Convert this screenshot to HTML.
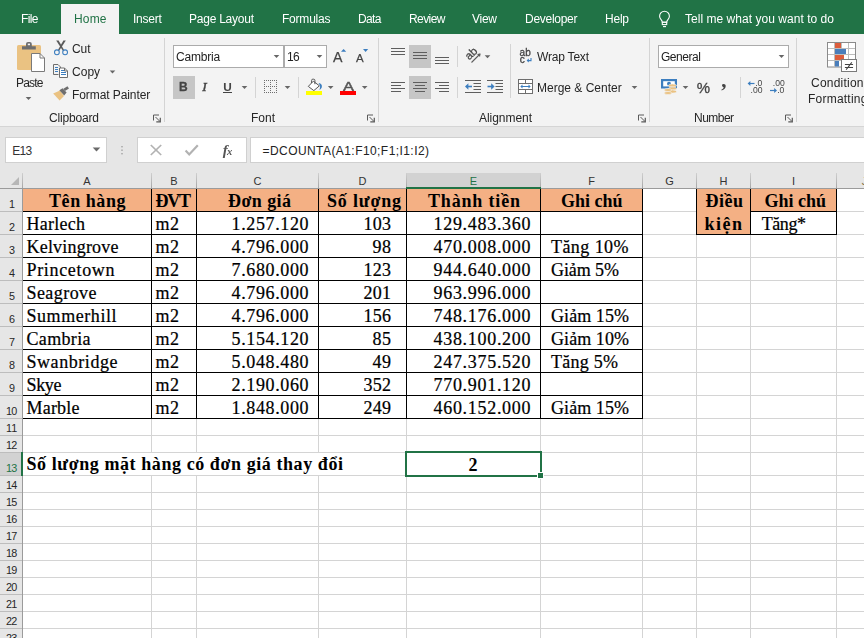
<!DOCTYPE html>
<html><head><meta charset="utf-8"><title>Excel</title>
<style>
html,body{margin:0;padding:0}
body{width:864px;height:638px;overflow:hidden;position:relative;background:#fff}
.b{position:absolute}
.t{position:absolute;white-space:pre}
.g{will-change:transform}
svg{position:absolute;overflow:visible}
</style></head><body>
<div class="b" style="left:0px;top:0px;width:864px;height:34px;background:#217346;"></div>
<div class="b" style="left:61px;top:4px;width:58px;height:30px;background:#f3f3f3;"></div>
<span class="t g" style="left:20.50px;top:9.34px;font-family:'Liberation Sans',sans-serif;font-size:12px;line-height:20px;color:#fff;letter-spacing:-0.615px;">File</span>
<span class="t g" style="left:73.50px;top:9.34px;font-family:'Liberation Sans',sans-serif;font-size:12px;line-height:20px;color:#217346;letter-spacing:0.161px;">Home</span>
<span class="t g" style="left:133.25px;top:9.34px;font-family:'Liberation Sans',sans-serif;font-size:12px;line-height:20px;color:#fff;letter-spacing:-0.253px;">Insert</span>
<span class="t g" style="left:189.00px;top:9.34px;font-family:'Liberation Sans',sans-serif;font-size:12px;line-height:20px;color:#fff;letter-spacing:-0.239px;">Page Layout</span>
<span class="t g" style="left:281.50px;top:9.34px;font-family:'Liberation Sans',sans-serif;font-size:12px;line-height:20px;color:#fff;letter-spacing:-0.217px;">Formulas</span>
<span class="t g" style="left:357.50px;top:9.34px;font-family:'Liberation Sans',sans-serif;font-size:12px;line-height:20px;color:#fff;letter-spacing:-0.620px;">Data</span>
<span class="t g" style="left:408.50px;top:9.34px;font-family:'Liberation Sans',sans-serif;font-size:12px;line-height:20px;color:#fff;letter-spacing:-0.572px;">Review</span>
<span class="t g" style="left:472.00px;top:9.34px;font-family:'Liberation Sans',sans-serif;font-size:12px;line-height:20px;color:#fff;letter-spacing:-0.266px;">View</span>
<span class="t g" style="left:524.50px;top:9.34px;font-family:'Liberation Sans',sans-serif;font-size:12px;line-height:20px;color:#fff;letter-spacing:-0.275px;">Developer</span>
<span class="t g" style="left:604.50px;top:9.34px;font-family:'Liberation Sans',sans-serif;font-size:12px;line-height:20px;color:#fff;letter-spacing:-0.229px;">Help</span>
<span class="t g" style="left:684.50px;top:9.34px;font-family:'Liberation Sans',sans-serif;font-size:12px;line-height:20px;color:#fff;letter-spacing:0.035px;">Tell me what you want to do</span>
<div class="b" style="left:0px;top:34px;width:864px;height:92px;background:#f3f3f3;"></div>
<div class="b" style="left:0px;top:126px;width:864px;height:47px;background:#e6e6e6;"></div>
<div class="b" style="left:0px;top:126px;width:864px;height:1px;background:#d5d5d5;"></div>
<div class="b" style="left:164px;top:38px;width:1px;height:84px;background:#d4d4d4;"></div>
<div class="b" style="left:378px;top:38px;width:1px;height:84px;background:#d4d4d4;"></div>
<div class="b" style="left:649px;top:38px;width:1px;height:84px;background:#d4d4d4;"></div>
<div class="b" style="left:796px;top:38px;width:1px;height:84px;background:#d4d4d4;"></div>
<span class="t g" style="left:15.50px;top:73.34px;font-family:'Liberation Sans',sans-serif;font-size:12px;line-height:20px;color:#262626;letter-spacing:-0.797px;">Paste</span>
<span class="t g" style="left:71.90px;top:39.34px;font-family:'Liberation Sans',sans-serif;font-size:12px;line-height:20px;color:#262626;letter-spacing:-0.044px;">Cut</span>
<span class="t g" style="left:71.90px;top:62.34px;font-family:'Liberation Sans',sans-serif;font-size:12px;line-height:20px;color:#262626;letter-spacing:0.028px;">Copy</span>
<span class="t g" style="left:71.70px;top:85.34px;font-family:'Liberation Sans',sans-serif;font-size:12px;line-height:20px;color:#262626;letter-spacing:-0.081px;">Format Painter</span>
<span class="t g" style="left:48.75px;top:108.34px;font-family:'Liberation Sans',sans-serif;font-size:12px;line-height:20px;color:#262626;letter-spacing:-0.172px;">Clipboard</span>
<span class="t g" style="left:251.00px;top:108.34px;font-family:'Liberation Sans',sans-serif;font-size:12px;line-height:20px;color:#262626;letter-spacing:-0.005px;">Font</span>
<span class="t g" style="left:479.00px;top:108.34px;font-family:'Liberation Sans',sans-serif;font-size:12px;line-height:20px;color:#262626;letter-spacing:-0.047px;">Alignment</span>
<span class="t g" style="left:694.40px;top:108.34px;font-family:'Liberation Sans',sans-serif;font-size:12px;line-height:20px;color:#262626;letter-spacing:-0.517px;">Number</span>
<span class="t g" style="left:537.00px;top:47.34px;font-family:'Liberation Sans',sans-serif;font-size:12px;line-height:20px;color:#262626;letter-spacing:-0.197px;">Wrap Text</span>
<span class="t g" style="left:537.00px;top:78.34px;font-family:'Liberation Sans',sans-serif;font-size:12px;line-height:20px;color:#262626;">Merge &amp; Center</span>
<span class="t g" style="left:810.70px;top:73.34px;font-family:'Liberation Sans',sans-serif;font-size:12px;line-height:20px;color:#262626;letter-spacing:0.225px;">Conditional</span>
<span class="t g" style="left:807.90px;top:88.84px;font-family:'Liberation Sans',sans-serif;font-size:12px;line-height:20px;color:#262626;letter-spacing:0.227px;">Formatting</span>
<div class="b" style="left:173px;top:45px;width:111px;height:23px;background:#fff;border:1px solid #ababab;box-sizing:border-box;"></div>
<div class="b" style="left:284px;top:45px;width:43px;height:23px;background:#fff;border:1px solid #ababab;box-sizing:border-box;"></div>
<span class="t g" style="left:176.40px;top:47.34px;font-family:'Liberation Sans',sans-serif;font-size:12px;line-height:20px;color:#222;letter-spacing:-0.210px;">Cambria</span>
<span class="t g" style="left:287.20px;top:47.34px;font-family:'Liberation Sans',sans-serif;font-size:12px;line-height:20px;color:#222;letter-spacing:-0.659px;">16</span>
<div class="b" style="left:658px;top:45px;width:131px;height:23px;background:#fff;border:1px solid #ababab;box-sizing:border-box;"></div>
<span class="t g" style="left:660.80px;top:47.34px;font-family:'Liberation Sans',sans-serif;font-size:12px;line-height:20px;color:#222;letter-spacing:-0.467px;">General</span>
<div class="b" style="left:173px;top:76px;width:22px;height:23px;background:#c6c6c6;"></div>
<div class="b" style="left:409px;top:45px;width:22px;height:23px;background:#c6c6c6;"></div>
<div class="b" style="left:409px;top:76px;width:22px;height:23px;background:#c6c6c6;"></div>
<div class="b" style="left:5px;top:137px;width:102px;height:26px;background:#fff;border:1px solid #d0d0d0;box-sizing:border-box;"></div>
<div class="b" style="left:137px;top:137px;width:110px;height:26px;background:#fff;border:1px solid #d0d0d0;box-sizing:border-box;"></div>
<div class="b" style="left:250px;top:137px;width:620px;height:26px;background:#fff;border:1px solid #d0d0d0;box-sizing:border-box;"></div>
<span class="t" style="left:12.30px;top:141.34px;font-family:'Liberation Sans',sans-serif;font-size:12px;line-height:20px;color:#333;letter-spacing:-0.680px;">E13</span>
<span class="t" style="left:262.50px;top:141.34px;font-family:'Liberation Sans',sans-serif;font-size:12px;line-height:20px;color:#222;letter-spacing:0.431px;">=DCOUNTA(A1:F10;F1;I1:I2)</span>
<div class="b" style="left:0px;top:189px;width:864px;height:460px;background:#fff;"></div>
<div class="b" style="left:151px;top:189px;width:1px;height:460px;background:#d4d4d4;"></div>
<div class="b" style="left:196px;top:189px;width:1px;height:460px;background:#d4d4d4;"></div>
<div class="b" style="left:318px;top:189px;width:1px;height:460px;background:#d4d4d4;"></div>
<div class="b" style="left:406px;top:189px;width:1px;height:460px;background:#d4d4d4;"></div>
<div class="b" style="left:540px;top:189px;width:1px;height:460px;background:#d4d4d4;"></div>
<div class="b" style="left:642px;top:189px;width:1px;height:460px;background:#d4d4d4;"></div>
<div class="b" style="left:696px;top:189px;width:1px;height:460px;background:#d4d4d4;"></div>
<div class="b" style="left:750px;top:189px;width:1px;height:460px;background:#d4d4d4;"></div>
<div class="b" style="left:836px;top:189px;width:1px;height:460px;background:#d4d4d4;"></div>
<div class="b" style="left:930px;top:189px;width:1px;height:460px;background:#d4d4d4;"></div>
<div class="b" style="left:23px;top:211px;width:850px;height:1px;background:#d4d4d4;"></div>
<div class="b" style="left:23px;top:234px;width:850px;height:1px;background:#d4d4d4;"></div>
<div class="b" style="left:23px;top:257px;width:850px;height:1px;background:#d4d4d4;"></div>
<div class="b" style="left:23px;top:280px;width:850px;height:1px;background:#d4d4d4;"></div>
<div class="b" style="left:23px;top:303px;width:850px;height:1px;background:#d4d4d4;"></div>
<div class="b" style="left:23px;top:326px;width:850px;height:1px;background:#d4d4d4;"></div>
<div class="b" style="left:23px;top:349px;width:850px;height:1px;background:#d4d4d4;"></div>
<div class="b" style="left:23px;top:372px;width:850px;height:1px;background:#d4d4d4;"></div>
<div class="b" style="left:23px;top:395px;width:850px;height:1px;background:#d4d4d4;"></div>
<div class="b" style="left:23px;top:418px;width:850px;height:1px;background:#d4d4d4;"></div>
<div class="b" style="left:23px;top:435px;width:850px;height:1px;background:#d4d4d4;"></div>
<div class="b" style="left:23px;top:452px;width:850px;height:1px;background:#d4d4d4;"></div>
<div class="b" style="left:23px;top:475px;width:850px;height:1px;background:#d4d4d4;"></div>
<div class="b" style="left:23px;top:492px;width:850px;height:1px;background:#d4d4d4;"></div>
<div class="b" style="left:23px;top:509px;width:850px;height:1px;background:#d4d4d4;"></div>
<div class="b" style="left:23px;top:526px;width:850px;height:1px;background:#d4d4d4;"></div>
<div class="b" style="left:23px;top:543px;width:850px;height:1px;background:#d4d4d4;"></div>
<div class="b" style="left:23px;top:560px;width:850px;height:1px;background:#d4d4d4;"></div>
<div class="b" style="left:23px;top:577px;width:850px;height:1px;background:#d4d4d4;"></div>
<div class="b" style="left:23px;top:594px;width:850px;height:1px;background:#d4d4d4;"></div>
<div class="b" style="left:23px;top:611px;width:850px;height:1px;background:#d4d4d4;"></div>
<div class="b" style="left:23px;top:628px;width:850px;height:1px;background:#d4d4d4;"></div>
<div class="b" style="left:23px;top:645px;width:850px;height:1px;background:#d4d4d4;"></div>
<div class="b" style="left:23px;top:662px;width:850px;height:1px;background:#d4d4d4;"></div>
<div class="b" style="left:23px;top:189px;width:619px;height:22px;background:#f4b084;"></div>
<div class="b" style="left:697px;top:189px;width:139px;height:22px;background:#f4b084;"></div>
<div class="b" style="left:697px;top:189px;width:53px;height:45px;background:#f4b084;"></div>
<div class="b" style="left:23px;top:453px;width:383px;height:22px;background:#fff;"></div>
<div class="b" style="left:22px;top:188px;width:1px;height:231px;background:#000;"></div>
<div class="b" style="left:151px;top:188px;width:1px;height:231px;background:#000;"></div>
<div class="b" style="left:196px;top:188px;width:1px;height:231px;background:#000;"></div>
<div class="b" style="left:318px;top:188px;width:1px;height:231px;background:#000;"></div>
<div class="b" style="left:406px;top:188px;width:1px;height:231px;background:#000;"></div>
<div class="b" style="left:540px;top:188px;width:1px;height:231px;background:#000;"></div>
<div class="b" style="left:642px;top:188px;width:1px;height:231px;background:#000;"></div>
<div class="b" style="left:22px;top:188px;width:621px;height:1px;background:#000;"></div>
<div class="b" style="left:22px;top:211px;width:621px;height:1px;background:#000;"></div>
<div class="b" style="left:22px;top:234px;width:621px;height:1px;background:#000;"></div>
<div class="b" style="left:22px;top:257px;width:621px;height:1px;background:#000;"></div>
<div class="b" style="left:22px;top:280px;width:621px;height:1px;background:#000;"></div>
<div class="b" style="left:22px;top:303px;width:621px;height:1px;background:#000;"></div>
<div class="b" style="left:22px;top:326px;width:621px;height:1px;background:#000;"></div>
<div class="b" style="left:22px;top:349px;width:621px;height:1px;background:#000;"></div>
<div class="b" style="left:22px;top:372px;width:621px;height:1px;background:#000;"></div>
<div class="b" style="left:22px;top:395px;width:621px;height:1px;background:#000;"></div>
<div class="b" style="left:22px;top:418px;width:621px;height:1px;background:#000;"></div>
<div class="b" style="left:696px;top:188px;width:1px;height:47px;background:#000;"></div>
<div class="b" style="left:750px;top:188px;width:1px;height:47px;background:#000;"></div>
<div class="b" style="left:836px;top:188px;width:1px;height:47px;background:#000;"></div>
<div class="b" style="left:696px;top:188px;width:141px;height:1px;background:#000;"></div>
<div class="b" style="left:696px;top:234px;width:141px;height:1px;background:#000;"></div>
<div class="b" style="left:750px;top:211px;width:87px;height:1px;background:#000;"></div>
<div class="b" style="left:0px;top:173px;width:864px;height:16px;background:#e6e6e6;"></div>
<div class="b" style="left:407px;top:173px;width:133px;height:16px;background:#d2d2d2;"></div>
<div class="b" style="left:0px;top:189px;width:22px;height:460px;background:#e6e6e6;"></div>
<div class="b" style="left:0px;top:453px;width:22px;height:22px;background:#d2d2d2;"></div>
<div class="b" style="left:151px;top:173px;width:1px;height:15px;background:linear-gradient(#cfcfcf,#a6a6a6);"></div>
<div class="b" style="left:196px;top:173px;width:1px;height:15px;background:linear-gradient(#cfcfcf,#a6a6a6);"></div>
<div class="b" style="left:318px;top:173px;width:1px;height:15px;background:linear-gradient(#cfcfcf,#a6a6a6);"></div>
<div class="b" style="left:406px;top:173px;width:1px;height:15px;background:linear-gradient(#cfcfcf,#a6a6a6);"></div>
<div class="b" style="left:540px;top:173px;width:1px;height:15px;background:linear-gradient(#cfcfcf,#a6a6a6);"></div>
<div class="b" style="left:642px;top:173px;width:1px;height:15px;background:linear-gradient(#cfcfcf,#a6a6a6);"></div>
<div class="b" style="left:696px;top:173px;width:1px;height:15px;background:linear-gradient(#cfcfcf,#a6a6a6);"></div>
<div class="b" style="left:750px;top:173px;width:1px;height:15px;background:linear-gradient(#cfcfcf,#a6a6a6);"></div>
<div class="b" style="left:836px;top:173px;width:1px;height:15px;background:linear-gradient(#cfcfcf,#a6a6a6);"></div>
<div class="b" style="left:930px;top:173px;width:1px;height:15px;background:linear-gradient(#cfcfcf,#a6a6a6);"></div>
<div class="b" style="left:0px;top:211px;width:22px;height:1px;background:#bdbdbd;"></div>
<div class="b" style="left:0px;top:234px;width:22px;height:1px;background:#bdbdbd;"></div>
<div class="b" style="left:0px;top:257px;width:22px;height:1px;background:#bdbdbd;"></div>
<div class="b" style="left:0px;top:280px;width:22px;height:1px;background:#bdbdbd;"></div>
<div class="b" style="left:0px;top:303px;width:22px;height:1px;background:#bdbdbd;"></div>
<div class="b" style="left:0px;top:326px;width:22px;height:1px;background:#bdbdbd;"></div>
<div class="b" style="left:0px;top:349px;width:22px;height:1px;background:#bdbdbd;"></div>
<div class="b" style="left:0px;top:372px;width:22px;height:1px;background:#bdbdbd;"></div>
<div class="b" style="left:0px;top:395px;width:22px;height:1px;background:#bdbdbd;"></div>
<div class="b" style="left:0px;top:418px;width:22px;height:1px;background:#bdbdbd;"></div>
<div class="b" style="left:0px;top:435px;width:22px;height:1px;background:#bdbdbd;"></div>
<div class="b" style="left:0px;top:452px;width:22px;height:1px;background:#bdbdbd;"></div>
<div class="b" style="left:0px;top:475px;width:22px;height:1px;background:#bdbdbd;"></div>
<div class="b" style="left:0px;top:492px;width:22px;height:1px;background:#bdbdbd;"></div>
<div class="b" style="left:0px;top:509px;width:22px;height:1px;background:#bdbdbd;"></div>
<div class="b" style="left:0px;top:526px;width:22px;height:1px;background:#bdbdbd;"></div>
<div class="b" style="left:0px;top:543px;width:22px;height:1px;background:#bdbdbd;"></div>
<div class="b" style="left:0px;top:560px;width:22px;height:1px;background:#bdbdbd;"></div>
<div class="b" style="left:0px;top:577px;width:22px;height:1px;background:#bdbdbd;"></div>
<div class="b" style="left:0px;top:594px;width:22px;height:1px;background:#bdbdbd;"></div>
<div class="b" style="left:0px;top:611px;width:22px;height:1px;background:#bdbdbd;"></div>
<div class="b" style="left:0px;top:628px;width:22px;height:1px;background:#bdbdbd;"></div>
<div class="b" style="left:0px;top:645px;width:22px;height:1px;background:#bdbdbd;"></div>
<div class="b" style="left:0px;top:662px;width:22px;height:1px;background:#bdbdbd;"></div>
<div class="b" style="left:0px;top:188px;width:864px;height:1px;background:#9b9b9b;"></div>
<div class="b" style="left:22px;top:173px;width:1px;height:470px;background:#9b9b9b;"></div>
<div class="b" style="left:22px;top:173px;width:1px;height:15px;background:linear-gradient(#cfcfcf,#a6a6a6);"></div>
<div class="b" style="left:406px;top:187px;width:135px;height:2px;background:#217346;"></div>
<div class="b" style="left:21px;top:452px;width:2px;height:24px;background:#217346;"></div>
<span class="t" style="left:83.33px;top:171.19px;font-family:'Liberation Sans',sans-serif;font-size:11px;line-height:20px;color:#333;">A</span>
<span class="t" style="left:170.33px;top:171.19px;font-family:'Liberation Sans',sans-serif;font-size:11px;line-height:20px;color:#333;">B</span>
<span class="t" style="left:253.52px;top:171.19px;font-family:'Liberation Sans',sans-serif;font-size:11px;line-height:20px;color:#333;">C</span>
<span class="t" style="left:358.52px;top:171.19px;font-family:'Liberation Sans',sans-serif;font-size:11px;line-height:20px;color:#333;">D</span>
<span class="t" style="left:469.83px;top:171.19px;font-family:'Liberation Sans',sans-serif;font-size:11px;line-height:20px;color:#217346;">E</span>
<span class="t" style="left:588.13px;top:171.19px;font-family:'Liberation Sans',sans-serif;font-size:11px;line-height:20px;color:#333;">F</span>
<span class="t" style="left:665.22px;top:171.19px;font-family:'Liberation Sans',sans-serif;font-size:11px;line-height:20px;color:#333;">G</span>
<span class="t" style="left:719.52px;top:171.19px;font-family:'Liberation Sans',sans-serif;font-size:11px;line-height:20px;color:#333;">H</span>
<span class="t" style="left:791.97px;top:171.19px;font-family:'Liberation Sans',sans-serif;font-size:11px;line-height:20px;color:#333;">I</span>
<span class="t" style="left:861.80px;top:171.19px;font-family:'Liberation Sans',sans-serif;font-size:11px;line-height:20px;color:#8a7a50;">J</span>
<span class="t" style="left:8.95px;top:194.16px;font-family:'Liberation Sans',sans-serif;font-size:10.8px;line-height:20px;color:#262626;">1</span>
<span class="t" style="left:8.95px;top:217.16px;font-family:'Liberation Sans',sans-serif;font-size:10.8px;line-height:20px;color:#262626;">2</span>
<span class="t" style="left:8.95px;top:240.16px;font-family:'Liberation Sans',sans-serif;font-size:10.8px;line-height:20px;color:#262626;">3</span>
<span class="t" style="left:8.95px;top:263.16px;font-family:'Liberation Sans',sans-serif;font-size:10.8px;line-height:20px;color:#262626;">4</span>
<span class="t" style="left:8.95px;top:286.16px;font-family:'Liberation Sans',sans-serif;font-size:10.8px;line-height:20px;color:#262626;">5</span>
<span class="t" style="left:8.95px;top:309.16px;font-family:'Liberation Sans',sans-serif;font-size:10.8px;line-height:20px;color:#262626;">6</span>
<span class="t" style="left:8.95px;top:332.16px;font-family:'Liberation Sans',sans-serif;font-size:10.8px;line-height:20px;color:#262626;">7</span>
<span class="t" style="left:8.95px;top:355.16px;font-family:'Liberation Sans',sans-serif;font-size:10.8px;line-height:20px;color:#262626;">8</span>
<span class="t" style="left:8.95px;top:378.16px;font-family:'Liberation Sans',sans-serif;font-size:10.8px;line-height:20px;color:#262626;">9</span>
<span class="t" style="left:5.95px;top:401.16px;font-family:'Liberation Sans',sans-serif;font-size:10.8px;line-height:20px;color:#262626;letter-spacing:-0.716px;">10</span>
<span class="t" style="left:5.95px;top:418.16px;font-family:'Liberation Sans',sans-serif;font-size:10.8px;line-height:20px;color:#262626;letter-spacing:0.081px;">11</span>
<span class="t" style="left:5.95px;top:435.16px;font-family:'Liberation Sans',sans-serif;font-size:10.8px;line-height:20px;color:#262626;letter-spacing:-0.716px;">12</span>
<span class="t" style="left:5.95px;top:458.16px;font-family:'Liberation Sans',sans-serif;font-size:10.8px;line-height:20px;color:#217346;letter-spacing:-0.716px;">13</span>
<span class="t" style="left:5.95px;top:475.16px;font-family:'Liberation Sans',sans-serif;font-size:10.8px;line-height:20px;color:#262626;letter-spacing:-0.716px;">14</span>
<span class="t" style="left:5.95px;top:492.16px;font-family:'Liberation Sans',sans-serif;font-size:10.8px;line-height:20px;color:#262626;letter-spacing:-0.716px;">15</span>
<span class="t" style="left:5.95px;top:509.16px;font-family:'Liberation Sans',sans-serif;font-size:10.8px;line-height:20px;color:#262626;letter-spacing:-0.716px;">16</span>
<span class="t" style="left:5.95px;top:526.16px;font-family:'Liberation Sans',sans-serif;font-size:10.8px;line-height:20px;color:#262626;letter-spacing:-0.716px;">17</span>
<span class="t" style="left:5.95px;top:543.16px;font-family:'Liberation Sans',sans-serif;font-size:10.8px;line-height:20px;color:#262626;letter-spacing:-0.716px;">18</span>
<span class="t" style="left:5.95px;top:560.16px;font-family:'Liberation Sans',sans-serif;font-size:10.8px;line-height:20px;color:#262626;letter-spacing:-0.716px;">19</span>
<span class="t" style="left:5.95px;top:577.16px;font-family:'Liberation Sans',sans-serif;font-size:10.8px;line-height:20px;color:#262626;letter-spacing:-0.716px;">20</span>
<span class="t" style="left:5.95px;top:594.16px;font-family:'Liberation Sans',sans-serif;font-size:10.8px;line-height:20px;color:#262626;letter-spacing:-0.716px;">21</span>
<span class="t" style="left:5.95px;top:611.16px;font-family:'Liberation Sans',sans-serif;font-size:10.8px;line-height:20px;color:#262626;letter-spacing:-0.716px;">22</span>
<span class="t" style="left:5.95px;top:628.16px;font-family:'Liberation Sans',sans-serif;font-size:10.8px;line-height:20px;color:#262626;letter-spacing:-0.716px;">23</span>
<div class="b" style="left:405px;top:451px;width:137px;height:26px;border:2px solid #217346;box-sizing:border-box;"></div>
<div class="b" style="left:539px;top:472px;width:6px;height:6px;background:#217346;border:1px solid #fff;box-sizing:content-box;left:537px;top:472px;width:5px;height:5px;"></div>
<span class="t" style="left:49.00px;top:191.43px;font-family:'Liberation Serif',serif;font-size:18px;line-height:20px;color:#000;letter-spacing:0.567px;font-weight:bold;">Tên hàng</span>
<span class="t" style="left:155.50px;top:191.43px;font-family:'Liberation Serif',serif;font-size:18px;line-height:20px;color:#000;letter-spacing:-1.258px;font-weight:bold;">ĐVT</span>
<span class="t" style="left:228.00px;top:191.43px;font-family:'Liberation Serif',serif;font-size:18px;line-height:20px;color:#000;letter-spacing:0.419px;font-weight:bold;">Đơn giá</span>
<span class="t" style="left:327.00px;top:191.43px;font-family:'Liberation Serif',serif;font-size:18px;line-height:20px;color:#000;letter-spacing:0.815px;font-weight:bold;">Số lượng</span>
<span class="t" style="left:428.00px;top:191.43px;font-family:'Liberation Serif',serif;font-size:18px;line-height:20px;color:#000;letter-spacing:0.828px;font-weight:bold;">Thành tiền</span>
<span class="t" style="left:561.00px;top:191.43px;font-family:'Liberation Serif',serif;font-size:18px;line-height:20px;color:#000;letter-spacing:-0.005px;font-weight:bold;">Ghi chú</span>
<span class="t" style="left:705.50px;top:191.43px;font-family:'Liberation Serif',serif;font-size:18px;line-height:20px;color:#000;letter-spacing:0.500px;font-weight:bold;">Điều</span>
<span class="t" style="left:704.50px;top:214.43px;font-family:'Liberation Serif',serif;font-size:18px;line-height:20px;color:#000;letter-spacing:1.495px;font-weight:bold;">kiện</span>
<span class="t" style="left:764.50px;top:191.43px;font-family:'Liberation Serif',serif;font-size:18px;line-height:20px;color:#000;letter-spacing:-0.005px;font-weight:bold;">Ghi chú</span>
<span class="t" style="left:761.75px;top:214.43px;font-family:'Liberation Serif',serif;font-size:18px;line-height:20px;color:#000;letter-spacing:-0.434px;-webkit-text-stroke:0.22px #000;">Tăng*</span>
<span class="t" style="left:26.50px;top:214.43px;font-family:'Liberation Serif',serif;font-size:18px;line-height:20px;color:#000;letter-spacing:0.272px;-webkit-text-stroke:0.22px #000;">Harlech</span>
<span class="t" style="left:155.50px;top:214.43px;font-family:'Liberation Serif',serif;font-size:18px;line-height:20px;color:#000;letter-spacing:0.484px;-webkit-text-stroke:0.22px #000;">m2</span>
<span class="t" style="left:231.50px;top:214.43px;font-family:'Liberation Serif',serif;font-size:18px;line-height:20px;color:#000;letter-spacing:0.625px;-webkit-text-stroke:0.22px #000;">1.257.120</span>
<span class="t" style="left:363.40px;top:214.43px;font-family:'Liberation Serif',serif;font-size:18px;line-height:20px;color:#000;letter-spacing:0.300px;-webkit-text-stroke:0.22px #000;">103</span>
<span class="t" style="left:433.50px;top:214.43px;font-family:'Liberation Serif',serif;font-size:18px;line-height:20px;color:#000;letter-spacing:0.700px;-webkit-text-stroke:0.22px #000;">129.483.360</span>
<span class="t" style="left:26.50px;top:237.43px;font-family:'Liberation Serif',serif;font-size:18px;line-height:20px;color:#000;letter-spacing:0.202px;-webkit-text-stroke:0.22px #000;">Kelvingrove</span>
<span class="t" style="left:155.50px;top:237.43px;font-family:'Liberation Serif',serif;font-size:18px;line-height:20px;color:#000;letter-spacing:0.484px;-webkit-text-stroke:0.22px #000;">m2</span>
<span class="t" style="left:231.50px;top:237.43px;font-family:'Liberation Serif',serif;font-size:18px;line-height:20px;color:#000;letter-spacing:0.625px;-webkit-text-stroke:0.22px #000;">4.796.000</span>
<span class="t" style="left:372.60px;top:237.43px;font-family:'Liberation Serif',serif;font-size:18px;line-height:20px;color:#000;letter-spacing:0.400px;-webkit-text-stroke:0.22px #000;">98</span>
<span class="t" style="left:433.50px;top:237.43px;font-family:'Liberation Serif',serif;font-size:18px;line-height:20px;color:#000;letter-spacing:0.700px;-webkit-text-stroke:0.22px #000;">470.008.000</span>
<span class="t" style="left:551.00px;top:237.43px;font-family:'Liberation Serif',serif;font-size:18px;line-height:20px;color:#000;letter-spacing:0.431px;-webkit-text-stroke:0.22px #000;">Tăng 10%</span>
<span class="t" style="left:26.50px;top:260.43px;font-family:'Liberation Serif',serif;font-size:18px;line-height:20px;color:#000;letter-spacing:0.668px;-webkit-text-stroke:0.22px #000;">Princetown</span>
<span class="t" style="left:155.50px;top:260.43px;font-family:'Liberation Serif',serif;font-size:18px;line-height:20px;color:#000;letter-spacing:0.484px;-webkit-text-stroke:0.22px #000;">m2</span>
<span class="t" style="left:231.50px;top:260.43px;font-family:'Liberation Serif',serif;font-size:18px;line-height:20px;color:#000;letter-spacing:0.625px;-webkit-text-stroke:0.22px #000;">7.680.000</span>
<span class="t" style="left:363.40px;top:260.43px;font-family:'Liberation Serif',serif;font-size:18px;line-height:20px;color:#000;letter-spacing:0.300px;-webkit-text-stroke:0.22px #000;">123</span>
<span class="t" style="left:433.50px;top:260.43px;font-family:'Liberation Serif',serif;font-size:18px;line-height:20px;color:#000;letter-spacing:0.700px;-webkit-text-stroke:0.22px #000;">944.640.000</span>
<span class="t" style="left:551.00px;top:260.43px;font-family:'Liberation Serif',serif;font-size:18px;line-height:20px;color:#000;letter-spacing:-0.081px;-webkit-text-stroke:0.22px #000;">Giảm 5%</span>
<span class="t" style="left:26.50px;top:283.43px;font-family:'Liberation Serif',serif;font-size:18px;line-height:20px;color:#000;letter-spacing:0.431px;-webkit-text-stroke:0.22px #000;">Seagrove</span>
<span class="t" style="left:155.50px;top:283.43px;font-family:'Liberation Serif',serif;font-size:18px;line-height:20px;color:#000;letter-spacing:0.484px;-webkit-text-stroke:0.22px #000;">m2</span>
<span class="t" style="left:231.50px;top:283.43px;font-family:'Liberation Serif',serif;font-size:18px;line-height:20px;color:#000;letter-spacing:0.625px;-webkit-text-stroke:0.22px #000;">4.796.000</span>
<span class="t" style="left:363.40px;top:283.43px;font-family:'Liberation Serif',serif;font-size:18px;line-height:20px;color:#000;letter-spacing:0.300px;-webkit-text-stroke:0.22px #000;">201</span>
<span class="t" style="left:433.50px;top:283.43px;font-family:'Liberation Serif',serif;font-size:18px;line-height:20px;color:#000;letter-spacing:0.700px;-webkit-text-stroke:0.22px #000;">963.996.000</span>
<span class="t" style="left:26.50px;top:306.43px;font-family:'Liberation Serif',serif;font-size:18px;line-height:20px;color:#000;letter-spacing:0.556px;-webkit-text-stroke:0.22px #000;">Summerhill</span>
<span class="t" style="left:155.50px;top:306.43px;font-family:'Liberation Serif',serif;font-size:18px;line-height:20px;color:#000;letter-spacing:0.484px;-webkit-text-stroke:0.22px #000;">m2</span>
<span class="t" style="left:231.50px;top:306.43px;font-family:'Liberation Serif',serif;font-size:18px;line-height:20px;color:#000;letter-spacing:0.625px;-webkit-text-stroke:0.22px #000;">4.796.000</span>
<span class="t" style="left:363.40px;top:306.43px;font-family:'Liberation Serif',serif;font-size:18px;line-height:20px;color:#000;letter-spacing:0.300px;-webkit-text-stroke:0.22px #000;">156</span>
<span class="t" style="left:433.50px;top:306.43px;font-family:'Liberation Serif',serif;font-size:18px;line-height:20px;color:#000;letter-spacing:0.700px;-webkit-text-stroke:0.22px #000;">748.176.000</span>
<span class="t" style="left:551.00px;top:306.43px;font-family:'Liberation Serif',serif;font-size:18px;line-height:20px;color:#000;letter-spacing:0.074px;-webkit-text-stroke:0.22px #000;">Giảm 15%</span>
<span class="t" style="left:26.50px;top:329.43px;font-family:'Liberation Serif',serif;font-size:18px;line-height:20px;color:#000;letter-spacing:0.336px;-webkit-text-stroke:0.22px #000;">Cambria</span>
<span class="t" style="left:155.50px;top:329.43px;font-family:'Liberation Serif',serif;font-size:18px;line-height:20px;color:#000;letter-spacing:0.484px;-webkit-text-stroke:0.22px #000;">m2</span>
<span class="t" style="left:231.50px;top:329.43px;font-family:'Liberation Serif',serif;font-size:18px;line-height:20px;color:#000;letter-spacing:0.625px;-webkit-text-stroke:0.22px #000;">5.154.120</span>
<span class="t" style="left:372.60px;top:329.43px;font-family:'Liberation Serif',serif;font-size:18px;line-height:20px;color:#000;letter-spacing:0.400px;-webkit-text-stroke:0.22px #000;">85</span>
<span class="t" style="left:433.50px;top:329.43px;font-family:'Liberation Serif',serif;font-size:18px;line-height:20px;color:#000;letter-spacing:0.700px;-webkit-text-stroke:0.22px #000;">438.100.200</span>
<span class="t" style="left:551.00px;top:329.43px;font-family:'Liberation Serif',serif;font-size:18px;line-height:20px;color:#000;letter-spacing:0.074px;-webkit-text-stroke:0.22px #000;">Giảm 10%</span>
<span class="t" style="left:26.50px;top:352.43px;font-family:'Liberation Serif',serif;font-size:18px;line-height:20px;color:#000;letter-spacing:0.557px;-webkit-text-stroke:0.22px #000;">Swanbridge</span>
<span class="t" style="left:155.50px;top:352.43px;font-family:'Liberation Serif',serif;font-size:18px;line-height:20px;color:#000;letter-spacing:0.484px;-webkit-text-stroke:0.22px #000;">m2</span>
<span class="t" style="left:231.50px;top:352.43px;font-family:'Liberation Serif',serif;font-size:18px;line-height:20px;color:#000;letter-spacing:0.625px;-webkit-text-stroke:0.22px #000;">5.048.480</span>
<span class="t" style="left:372.60px;top:352.43px;font-family:'Liberation Serif',serif;font-size:18px;line-height:20px;color:#000;letter-spacing:0.400px;-webkit-text-stroke:0.22px #000;">49</span>
<span class="t" style="left:433.50px;top:352.43px;font-family:'Liberation Serif',serif;font-size:18px;line-height:20px;color:#000;letter-spacing:0.700px;-webkit-text-stroke:0.22px #000;">247.375.520</span>
<span class="t" style="left:551.00px;top:352.43px;font-family:'Liberation Serif',serif;font-size:18px;line-height:20px;color:#000;letter-spacing:0.253px;-webkit-text-stroke:0.22px #000;">Tăng 5%</span>
<span class="t" style="left:26.50px;top:375.43px;font-family:'Liberation Serif',serif;font-size:18px;line-height:20px;color:#000;letter-spacing:-0.333px;-webkit-text-stroke:0.22px #000;">Skye</span>
<span class="t" style="left:155.50px;top:375.43px;font-family:'Liberation Serif',serif;font-size:18px;line-height:20px;color:#000;letter-spacing:0.484px;-webkit-text-stroke:0.22px #000;">m2</span>
<span class="t" style="left:231.50px;top:375.43px;font-family:'Liberation Serif',serif;font-size:18px;line-height:20px;color:#000;letter-spacing:0.625px;-webkit-text-stroke:0.22px #000;">2.190.060</span>
<span class="t" style="left:363.40px;top:375.43px;font-family:'Liberation Serif',serif;font-size:18px;line-height:20px;color:#000;letter-spacing:0.300px;-webkit-text-stroke:0.22px #000;">352</span>
<span class="t" style="left:433.50px;top:375.43px;font-family:'Liberation Serif',serif;font-size:18px;line-height:20px;color:#000;letter-spacing:0.700px;-webkit-text-stroke:0.22px #000;">770.901.120</span>
<span class="t" style="left:26.50px;top:398.43px;font-family:'Liberation Serif',serif;font-size:18px;line-height:20px;color:#000;letter-spacing:0.203px;-webkit-text-stroke:0.22px #000;">Marble</span>
<span class="t" style="left:155.50px;top:398.43px;font-family:'Liberation Serif',serif;font-size:18px;line-height:20px;color:#000;letter-spacing:0.484px;-webkit-text-stroke:0.22px #000;">m2</span>
<span class="t" style="left:231.50px;top:398.43px;font-family:'Liberation Serif',serif;font-size:18px;line-height:20px;color:#000;letter-spacing:0.625px;-webkit-text-stroke:0.22px #000;">1.848.000</span>
<span class="t" style="left:363.40px;top:398.43px;font-family:'Liberation Serif',serif;font-size:18px;line-height:20px;color:#000;letter-spacing:0.300px;-webkit-text-stroke:0.22px #000;">249</span>
<span class="t" style="left:433.50px;top:398.43px;font-family:'Liberation Serif',serif;font-size:18px;line-height:20px;color:#000;letter-spacing:0.700px;-webkit-text-stroke:0.22px #000;">460.152.000</span>
<span class="t" style="left:551.00px;top:398.43px;font-family:'Liberation Serif',serif;font-size:18px;line-height:20px;color:#000;letter-spacing:0.074px;-webkit-text-stroke:0.22px #000;">Giảm 15%</span>
<span class="t" style="left:26.50px;top:454.43px;font-family:'Liberation Serif',serif;font-size:18px;line-height:20px;color:#000;letter-spacing:0.575px;font-weight:bold;">Số lượng mặt hàng có đơn giá thay đổi</span>
<span class="t" style="left:468.50px;top:455.43px;font-family:'Liberation Serif',serif;font-size:18px;line-height:20px;color:#000;font-weight:bold;">2</span>
<svg width="864" height="638" viewBox="0 0 864 638" style="left:0;top:0">
<path d="M662.3 22.2 C662.3 20 659.6 19 659.6 16.2 A4.9 4.9 0 0 1 669.4 16.2 C669.4 19 666.7 20 666.7 22.2 Z" fill="none" stroke="#fff" stroke-width="1.1" />
<rect x="662.3" y="22.2" width="4.4" height="2.4" fill="none" stroke="#fff" stroke-width="1.1"/>
<line x1="663" y1="26.6" x2="666" y2="26.6" stroke="#fff" stroke-width="1.1" />
<rect x="17" y="45" width="24" height="25" fill="#eac282" rx="1.5"/>
<path d="M22 49.5 v-3.2 h4 v-2.3 a2 2 0 0 1 2 -2 h1.8 a2 2 0 0 1 2 2 v2.3 h4 v3.2 z" fill="#6e6e6e" />
<rect x="27.8" y="43.6" width="2.2" height="1.6" fill="#f3f3f3"/>
<path d="M31.5 53.5 h8.5 l4.5 4.5 v13.5 h-13 z" fill="#fff" stroke="#7a7a7a" stroke-width="1" />
<path d="M40 53.5 v4.5 h4.5" fill="none" stroke="#7a7a7a" stroke-width="1" />
<path d="M25.7 97 h5.6 l-2.8 3 z" fill="#666" />
<path d="M56.2 40.6 L58.6 40.6 L64.2 50.2 L63 50.9 Z" fill="#5a5a5a" />
<path d="M65.8 40.6 L63.4 40.6 L57.8 50.2 L59 50.9 Z" fill="#5a5a5a" />
<circle cx="56.9" cy="52.3" r="2.4" fill="none" stroke="#3c7ebf" stroke-width="1.05"/>
<circle cx="65.1" cy="52.3" r="2.4" fill="none" stroke="#3c7ebf" stroke-width="1.05"/>
<path d="M53.5 64.5 h4.5 l2.5 2.5 v1 M53.5 64.5 v10 h5" fill="none" stroke="#6e6e6e" stroke-width="1" />
<path d="M59.5 68 h5 l3 3 v6.5 h-8 z" fill="#fff" stroke="#6e6e6e" stroke-width="1" />
<path d="M64.5 68 v3 h3" fill="none" stroke="#6e6e6e" stroke-width="1" />
<rect x="55" y="67" width="3" height="1" fill="#3c7ebf"/>
<rect x="55" y="69" width="3" height="1" fill="#3c7ebf"/>
<rect x="55" y="71" width="3" height="1" fill="#3c7ebf"/>
<rect x="61" y="72" width="5" height="1" fill="#3c7ebf"/>
<rect x="61" y="74" width="5" height="1" fill="#3c7ebf"/>
<rect x="61" y="70" width="3" height="1" fill="#3c7ebf"/>
<path d="M109.7 70.5 h5.6 l-2.8 3 z" fill="#666" />
<path d="M53.2 93.6 L60 90.6 L64 96 L59.6 100.6 Z" fill="#eac282" />
<path d="M59.4 90.2 L62.6 88.2 L66.6 92.4 L64.2 95.6 Z" fill="#6e6e6e" />
<line x1="64.2" y1="89.9" x2="68.2" y2="87.3" stroke="#6e6e6e" stroke-width="2.8" />
<path d="M273.7 55 h5.6 l-2.8 3 z" fill="#666" />
<path d="M316.7 55 h5.6 l-2.8 3 z" fill="#666" />
<text x="333" y="62" font-size="14.2" fill="#444" text-anchor="start" font-family="'Liberation Sans',sans-serif" stroke="#444" stroke-width=".25">A</text>
<path d="M341 51.8 l2.6 -2.8 l2.6 2.8 z" fill="#3c7ebf" />
<text x="356" y="62" font-size="11.5" fill="#444" text-anchor="start" font-family="'Liberation Sans',sans-serif" stroke="#444" stroke-width=".25">A</text>
<path d="M363 49 h5.2 l-2.6 2.9 z" fill="#3c7ebf" />
<text x="179" y="90.6" font-size="12" fill="#444" text-anchor="start" font-family="'Liberation Sans',sans-serif" font-weight="bold" stroke="#444" stroke-width=".3">B</text>
<text x="202.3" y="90.8" font-size="13.5" fill="#444" text-anchor="start" font-family="'Liberation Serif',serif" font-style="italic" stroke="#444" stroke-width=".45">I</text>
<text x="223.2" y="90.5" font-size="11.8" fill="#444" text-anchor="start" font-family="'Liberation Sans',sans-serif" font-weight="bold">U</text>
<rect x="223" y="92" width="9" height="1" fill="#444"/>
<path d="M241.7 86 h5.6 l-2.8 3 z" fill="#666" />
<rect x="255" y="77" width="1" height="21" fill="#d4d4d4"/>
<line x1="264" y1="80.5" x2="278" y2="80.5" stroke="#6e6e6e" stroke-width="1" stroke-dasharray="1 1"/>
<line x1="264" y1="86.5" x2="278" y2="86.5" stroke="#6e6e6e" stroke-width="1" stroke-dasharray="1 1"/>
<line x1="264" y1="92.5" x2="278" y2="92.5" stroke="#6e6e6e" stroke-width="1" stroke-dasharray="1 1"/>
<line x1="264.5" y1="80" x2="264.5" y2="93" stroke="#6e6e6e" stroke-width="1" stroke-dasharray="1 1"/>
<line x1="270.5" y1="80" x2="270.5" y2="93" stroke="#6e6e6e" stroke-width="1" stroke-dasharray="1 1"/>
<line x1="276.5" y1="80" x2="276.5" y2="93" stroke="#6e6e6e" stroke-width="1" stroke-dasharray="1 1"/>
<path d="M284.7 86 h5.6 l-2.8 3 z" fill="#666" />
<rect x="298" y="77" width="1" height="21" fill="#d4d4d4"/>
<path d="M308.3 86.4 L313.3 81.2 L319.4 85.8 L313.8 90.6 Z" fill="#fff" stroke="#555" stroke-width="1" />
<path d="M311.6 83 v-2.6 a1.2 1.2 0 0 1 1.2 -1.2 h.9 a1.2 1.2 0 0 1 1.2 1.2 v3.8" fill="none" stroke="#555" stroke-width="1" />
<path d="M318.6 83 c2.6 .4 3.8 2.2 3.2 4.2 c-.3 1.2 -1.2 2.2 -2.4 2.8 c.6 -1.6 .8 -2.8 .6 -4.2 z" fill="#3c7ebf" />
<rect x="306" y="91" width="16" height="4" fill="#ffff00"/>
<path d="M327.9 86 h5.6 l-2.8 3 z" fill="#666" />
<text x="342.9" y="91" font-size="13.4" fill="#555" text-anchor="start" font-family="'Liberation Sans',sans-serif" textLength="11" lengthAdjust="spacingAndGlyphs" stroke="#555" stroke-width=".5">A</text>
<rect x="340" y="91" width="16" height="4" fill="#ff0000"/>
<path d="M361.9 86 h5.6 l-2.8 3 z" fill="#666" />
<path d="M153.5 120.5 v-5.5 h5.5" fill="none" stroke="#5a5a5a" stroke-width="1" />
<line x1="155.5" y1="117" x2="160" y2="121.5" stroke="#5a5a5a" stroke-width="1" />
<path d="M160.3 117.8 v4 h-4" fill="none" stroke="#5a5a5a" stroke-width="1.2" />
<path d="M367.5 120.5 v-5.5 h5.5" fill="none" stroke="#5a5a5a" stroke-width="1" />
<line x1="369.5" y1="117" x2="374" y2="121.5" stroke="#5a5a5a" stroke-width="1" />
<path d="M374.3 117.8 v4 h-4" fill="none" stroke="#5a5a5a" stroke-width="1.2" />
<path d="M638.5 120.5 v-5.5 h5.5" fill="none" stroke="#5a5a5a" stroke-width="1" />
<line x1="640.5" y1="117" x2="645" y2="121.5" stroke="#5a5a5a" stroke-width="1" />
<path d="M645.3 117.8 v4 h-4" fill="none" stroke="#5a5a5a" stroke-width="1.2" />
<path d="M785.5 120.5 v-5.5 h5.5" fill="none" stroke="#5a5a5a" stroke-width="1" />
<line x1="787.5" y1="117" x2="792" y2="121.5" stroke="#5a5a5a" stroke-width="1" />
<path d="M792.3 117.8 v4 h-4" fill="none" stroke="#5a5a5a" stroke-width="1.2" />
<rect x="391" y="48" width="14" height="1" fill="#5e5e5e"/>
<rect x="391" y="51" width="14" height="1" fill="#5e5e5e"/>
<rect x="391" y="54" width="14" height="1" fill="#5e5e5e"/>
<rect x="413" y="52" width="14" height="1" fill="#5e5e5e"/>
<rect x="413" y="55" width="14" height="1" fill="#5e5e5e"/>
<rect x="413" y="58" width="14" height="1" fill="#5e5e5e"/>
<rect x="435" y="57" width="14" height="1" fill="#5e5e5e"/>
<rect x="435" y="60" width="14" height="1" fill="#5e5e5e"/>
<rect x="435" y="63" width="14" height="1" fill="#5e5e5e"/>
<rect x="391" y="82" width="14" height="1" fill="#5e5e5e"/>
<rect x="413" y="82" width="14" height="1" fill="#5e5e5e"/>
<rect x="435" y="82" width="14" height="1" fill="#5e5e5e"/>
<rect x="391" y="85" width="10" height="1" fill="#5e5e5e"/>
<rect x="415" y="85" width="10" height="1" fill="#5e5e5e"/>
<rect x="439" y="85" width="10" height="1" fill="#5e5e5e"/>
<rect x="391" y="88" width="14" height="1" fill="#5e5e5e"/>
<rect x="413" y="88" width="14" height="1" fill="#5e5e5e"/>
<rect x="435" y="88" width="14" height="1" fill="#5e5e5e"/>
<rect x="391" y="91" width="10" height="1" fill="#5e5e5e"/>
<rect x="415" y="91" width="10" height="1" fill="#5e5e5e"/>
<rect x="439" y="91" width="10" height="1" fill="#5e5e5e"/>
<rect x="457" y="46" width="1" height="21" fill="#d4d4d4"/>
<rect x="457" y="77" width="1" height="21" fill="#d4d4d4"/>
<rect x="510" y="44" width="1" height="54" fill="#d4d4d4"/>
<text transform="translate(469.3,60.6) rotate(-45)" font-size="11.2" fill="#444" stroke="#444" stroke-width=".25" font-family="'Liberation Sans',sans-serif">ab</text>
<line x1="471.5" y1="62.5" x2="480" y2="54" stroke="#5e5e5e" stroke-width="1.1" />
<path d="M480.6 53.4 l-3.6 .6 l3 3 z" fill="#5e5e5e" />
<path d="M484.7 55.3 h5.6 l-2.8 3 z" fill="#666" />
<text x="519.6" y="55.8" font-size="10" fill="#444" text-anchor="start" font-family="'Liberation Sans',sans-serif" stroke="#444" stroke-width=".3">ab</text>
<text x="519.8" y="62.8" font-size="10" fill="#444" text-anchor="start" font-family="'Liberation Sans',sans-serif" stroke="#444" stroke-width=".3">c</text>
<path d="M531 58 v2.6 h-3.4" fill="none" stroke="#3c7ebf" stroke-width="1.1" />
<path d="M526.6 60.6 l2.2 -2 v4 z" fill="#3c7ebf" />
<rect x="465" y="80" width="16" height="1" fill="#5e5e5e"/>
<rect x="465" y="92" width="16" height="1" fill="#5e5e5e"/>
<rect x="473.5" y="83" width="7.5" height="1" fill="#5e5e5e"/>
<rect x="473.5" y="86" width="7.5" height="1" fill="#5e5e5e"/>
<rect x="473.5" y="89" width="7.5" height="1" fill="#5e5e5e"/>
<rect x="487" y="80" width="16" height="1" fill="#5e5e5e"/>
<rect x="487" y="92" width="16" height="1" fill="#5e5e5e"/>
<rect x="495.5" y="83" width="7.5" height="1" fill="#5e5e5e"/>
<rect x="495.5" y="86" width="7.5" height="1" fill="#5e5e5e"/>
<rect x="495.5" y="89" width="7.5" height="1" fill="#5e5e5e"/>
<line x1="466.5" y1="86.5" x2="472" y2="86.5" stroke="#3c7ebf" stroke-width="1.6" />
<path d="M465 86.5 l3.4 -3.2 v6.4 z" fill="#3c7ebf" />
<line x1="487.5" y1="86.5" x2="492.5" y2="86.5" stroke="#3c7ebf" stroke-width="1.6" />
<path d="M494.6 86.5 l-3.4 -3.2 v6.4 z" fill="#3c7ebf" />
<rect x="518.5" y="79.5" width="14" height="14" fill="#fff" stroke="#6e6e6e" stroke-width="1"/>
<rect x="519" y="83" width="13" height="1" fill="#6e6e6e"/>
<rect x="519" y="89" width="13" height="1" fill="#6e6e6e"/>
<rect x="525" y="80" width="1" height="3" fill="#6e6e6e"/>
<rect x="525" y="90" width="1" height="3" fill="#6e6e6e"/>
<line x1="521.5" y1="86.5" x2="529.5" y2="86.5" stroke="#3c7ebf" stroke-width="1" />
<path d="M520.3 86.5 l2.2 -2 v4 z" fill="#3c7ebf" />
<path d="M530.7 86.5 l-2.2 -2 v4 z" fill="#3c7ebf" />
<path d="M631.7 86 h5.6 l-2.8 3 z" fill="#666" />
<path d="M778.7 55 h5.6 l-2.8 3 z" fill="#666" />
<rect x="661.5" y="79.5" width="15" height="8.5" fill="#3c7ebf" stroke="#3c7ebf" stroke-width="1"/>
<rect x="663.2" y="81.2" width="11.6" height="5.2" fill="#fff"/>
<circle cx="669" cy="83.8" r="2" fill="#3c7ebf"/>
<ellipse cx="672.5" cy="85.5" rx="4" ry="1.6" fill="#eac282" stroke="#f3f3f3" stroke-width=".6"/>
<ellipse cx="672.5" cy="88.5" rx="4" ry="1.6" fill="#eac282" stroke="#f3f3f3" stroke-width=".6"/>
<ellipse cx="672.5" cy="91.5" rx="4" ry="1.6" fill="#eac282" stroke="#f3f3f3" stroke-width=".6"/>
<ellipse cx="668" cy="90" rx="3.6" ry="1.5" fill="#eac282" stroke="#f3f3f3" stroke-width=".6"/>
<ellipse cx="668" cy="93" rx="3.6" ry="1.5" fill="#eac282" stroke="#f3f3f3" stroke-width=".6"/>
<path d="M682.7 86 h5.6 l-2.8 3 z" fill="#666" />
<text x="696.8" y="92.8" font-size="15" fill="#444" text-anchor="start" font-family="'Liberation Sans',sans-serif" stroke="#444" stroke-width=".3">%</text>
<text x="721.3" y="87.4" font-size="21" fill="#444" text-anchor="start" font-family="'Liberation Serif',serif" font-weight="bold">,</text>
<rect x="740" y="77" width="1" height="21" fill="#d4d4d4"/>
<text x="755.2" y="86" font-size="8.6" fill="#444" text-anchor="start" font-family="'Liberation Sans',sans-serif" >.0</text>
<text x="750.6" y="93" font-size="8.6" fill="#444" text-anchor="start" font-family="'Liberation Sans',sans-serif" >.00</text>
<line x1="749" y1="83.5" x2="754.5" y2="83.5" stroke="#3c7ebf" stroke-width="1.2" />
<path d="M747.6 83.5 l2.8 -2.6 v5.2 z" fill="#3c7ebf" />
<text x="772.8" y="86" font-size="8.6" fill="#444" text-anchor="start" font-family="'Liberation Sans',sans-serif" >.00</text>
<text x="777.2" y="93" font-size="8.6" fill="#444" text-anchor="start" font-family="'Liberation Sans',sans-serif" >.0</text>
<line x1="770" y1="90.5" x2="775" y2="90.5" stroke="#3c7ebf" stroke-width="1.2" />
<path d="M777 90.5 l-2.8 -2.6 v5.2 z" fill="#3c7ebf" />
<rect x="827.5" y="42.5" width="28" height="24.5" fill="#fff" stroke="#8a8a8a" stroke-width="1"/>
<rect x="834" y="43" width="1" height="24" fill="#bdbdbd"/>
<rect x="841" y="43" width="1" height="24" fill="#bdbdbd"/>
<rect x="848" y="43" width="1" height="24" fill="#bdbdbd"/>
<rect x="828" y="48" width="27" height="1" fill="#bdbdbd"/>
<rect x="828" y="54" width="27" height="1" fill="#bdbdbd"/>
<rect x="828" y="60" width="27" height="1" fill="#bdbdbd"/>
<rect x="835" y="43" width="6" height="5" fill="#dc5d3c"/>
<rect x="835" y="49" width="11" height="5" fill="#4a7ebb"/>
<rect x="835" y="55" width="9" height="5" fill="#dc5d3c"/>
<rect x="835" y="61" width="4" height="5.5" fill="#4a7ebb"/>
<rect x="841.5" y="59.5" width="15" height="12" fill="#fff" stroke="#7a7a7a" stroke-width="1"/>
<text x="849.2" y="70.3" font-size="13" fill="#444" text-anchor="middle" font-family="'DejaVu Sans','Liberation Sans',sans-serif" >≠</text>
<path d="M92.7 147.5 h7.6 l-3.8 4 z" fill="#6a6a6a" />
<rect x="121.3" y="146" width="1.4" height="1.4" fill="#a0a0a0"/>
<rect x="121.3" y="149.5" width="1.4" height="1.4" fill="#a0a0a0"/>
<rect x="121.3" y="153" width="1.4" height="1.4" fill="#a0a0a0"/>
<line x1="150.8" y1="145" x2="161.2" y2="155" stroke="#b2b2b2" stroke-width="1.7" />
<line x1="161.2" y1="145" x2="150.8" y2="155" stroke="#b2b2b2" stroke-width="1.7" />
<path d="M185.6 150.6 l3.6 3.8 l8.6 -9.2" fill="none" stroke="#b2b2b2" stroke-width="2.2" />
<text x="222.8" y="154.5" font-size="13" fill="#555" font-weight="bold" font-family="'Liberation Serif',serif" font-style="italic"><tspan font-size="15">f</tspan><tspan dx="-0.8" font-size="10.5">x</tspan></text>
<path d="M19 177 v8 h-8 z" fill="#b7b7b7" />
</svg>
</body></html>
